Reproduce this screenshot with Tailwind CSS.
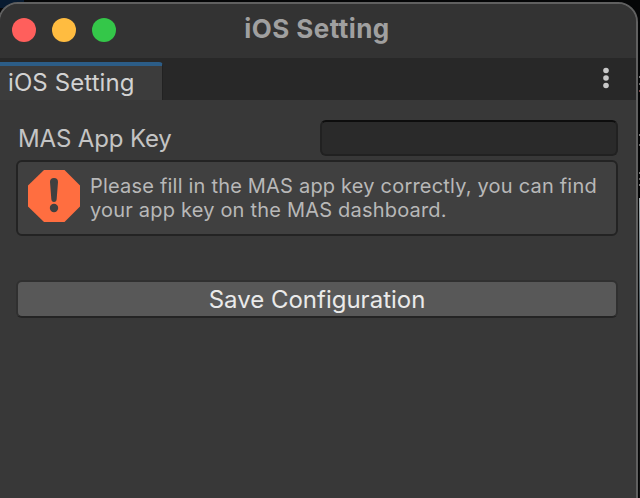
<!DOCTYPE html>
<html lang="en">
<head>
<meta charset="utf-8">
<title>iOS Setting</title>
<script src="https://cdn.jsdelivr.net/npm/@tailwindcss/browser@4"></script>
</head>
<body class="relative w-[640px] h-[498px] overflow-hidden bg-[#050607] font-['Inter',sans-serif]">
<div class="absolute left-0 top-0 h-2 w-6 bg-[#071a30]"></div>
<div class="absolute right-0 top-[76px] flex w-px flex-col gap-[5px]">
  <span class="h-[2px] bg-[#777]"></span><span class="h-[2px] bg-[#666]"></span><span class="h-[2px] bg-[#744]"></span>
</div>
<div class="absolute right-0 top-[134px] flex w-px flex-col gap-[8px]">
  <span class="h-[2px] bg-[#777]"></span><span class="h-[2px] bg-[#666]"></span>
</div>
<div class="absolute right-0 top-[172px] flex w-px flex-col gap-[4px]">
  <span class="h-[2px] bg-[#777]"></span><span class="h-[2px] bg-[#666]"></span><span class="h-[2px] bg-[#777]"></span>
</div>
<div class="absolute right-0 top-[198px] h-[300px] w-px bg-linear-to-b from-[#a4adb0] via-[#59666c] via-30% to-[#111] to-60%"></div>
<main class="relative -ml-[2px] mt-[2px] flex h-[510px] w-[640px] flex-col overflow-hidden rounded-t-[20px] border-2 border-[#606060] bg-[#383838]">
  <header class="relative flex h-[54px] shrink-0 items-start bg-[#333]">
    <div class="flex gap-4 pt-[14px] pl-3">
      <span class="size-6 rounded-full bg-[#ff5f5c]"></span>
      <span class="size-6 rounded-full bg-[#ffbc40]"></span>
      <span class="size-6 rounded-full bg-[#34c749]"></span>
    </div>
    <h1 class="absolute left-0 top-[9px] w-[634px] text-center text-[26px] leading-8 font-bold tracking-[0.45px] text-[#a0a0a0]">iOS Setting</h1>
  </header>
  <nav class="flex h-[42px] shrink-0 items-end justify-between bg-[#282828]">
    <div class="h-[38px] w-[163px] rounded-tr-[4px] border-t-4 border-r border-t-[#2c5d87] border-r-[#222] bg-[#3c3c3c] pl-2 text-[24px] leading-[33px] tracking-[0.1px] text-[#d2d2d2]">iOS Setting</div>
    <svg class="mr-[25px] h-[42px] w-[10px]" viewBox="0 0 10 42" fill="#c8c8c8"><circle cx="5" cy="12.500" r="2.800"/><circle cx="5" cy="20" r="2.800"/><circle cx="5" cy="27.500" r="2.800"/></svg>
  </nav>
  <section class="flex flex-col pt-5 pr-[18px] pl-4">
    <div class="flex h-9 items-center justify-between">
      <label for="key" class="pt-[2px] pl-[2px] text-[24px] tracking-[-0.15px] text-[#c4c4c4]">MAS App Key</label>
      <input id="key" class="h-9 w-[298px] rounded-md border-2 border-[#212121] border-t-[#0d0d0d] bg-[#2a2a2a] outline-none">
    </div>
    <div class="mt-1 flex h-[76px] rounded-md border-2 border-[#232323] bg-[#404040]">
      <svg class="mt-2 ml-[10px] size-[52px] shrink-0" viewBox="0 0 52 52"><path fill="#ff6e40" d="M16 0h20.500L52 15.500v21L36.500 52H16L0 36.500v-21z"/><path fill="#404040" d="M22 12Q22 8 26 8t4 4L28.700 29Q28.500 32 26 32t-2.700-3z"/><circle cx="26" cy="38" r="4.200" fill="#404040"/></svg>
      <p class="mt-[12px] ml-[10px] whitespace-nowrap text-[20px] leading-6 tracking-[0.2px] text-[#b8b8b8]">Please fill in the MAS app key correctly, you can find<br>your app key on the MAS dashboard.</p>
    </div>
    <button class="mt-11 h-[38px] rounded-md border-2 border-[#303030] border-b-[#242424] bg-[#585858] text-[24px] leading-[36px] text-[#eaeaea]">Save Configuration</button>
  </section>
</main>
</body>
</html>
